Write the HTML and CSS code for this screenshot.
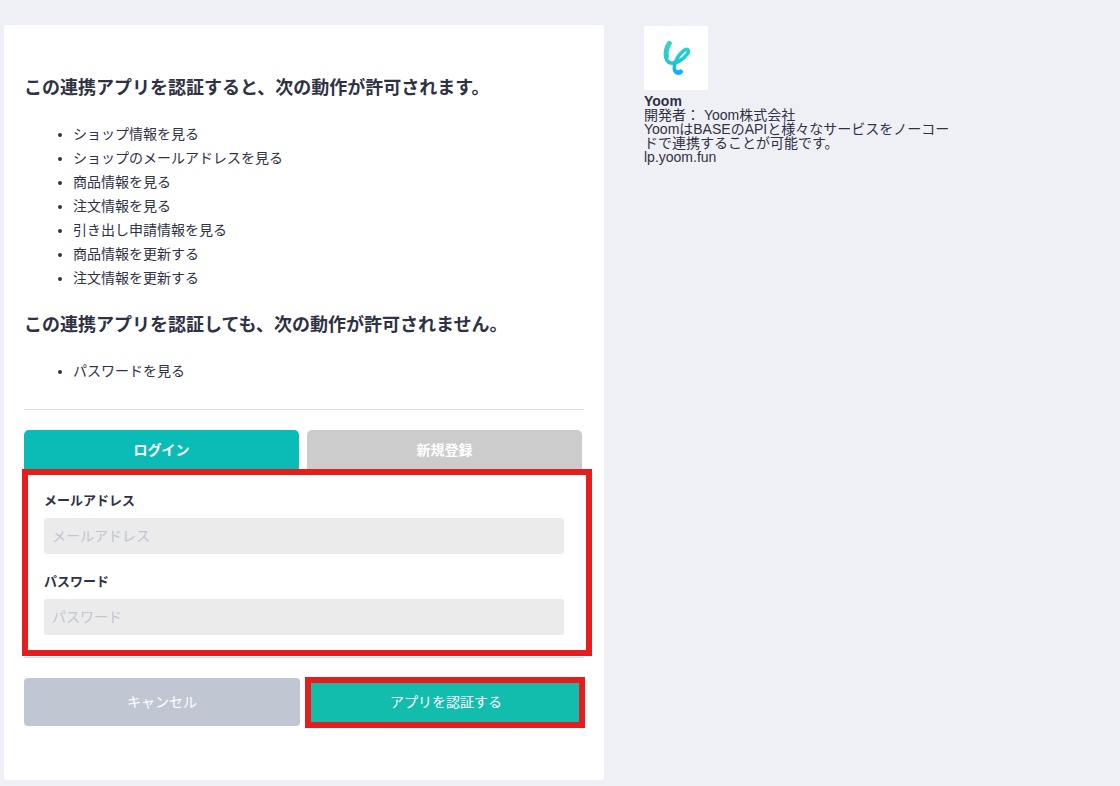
FILE: index.html
```html
<!DOCTYPE html>
<html lang="ja">
<head>
  <meta charset="UTF-8">
  <meta name="viewport" content="width=device-width, initial-scale=1.0">
  <title>アプリ連携の認証</title>
  <link rel="stylesheet" href="styles.css">
</head>
<body>

  <div class="container">
    <main class="auth-card">
      <h2>この連携アプリを認証すると、次の動作が許可されます。</h2>
      <ul class="scope-list">
        <li>ショップ情報を見る</li>
        <li>ショップのメールアドレスを見る</li>
        <li>商品情報を見る</li>
        <li>注文情報を見る</li>
        <li>引き出し申請情報を見る</li>
        <li>商品情報を更新する</li>
        <li>注文情報を更新する</li>
      </ul>

      <h2>この連携アプリを認証しても、次の動作が許可されません。</h2>
      <ul class="scope-list">
        <li>パスワードを見る</li>
      </ul>

      <form class="auth-form">
        <div class="tabs">
          <button type="button" class="tab active">ログイン</button>
          <button type="button" class="tab">新規登録</button>
        </div>

        <div class="login-panel">
          <label for="email">メールアドレス</label>
          <input id="email" type="email" placeholder="メールアドレス">
          <label for="password">パスワード</label>
          <input id="password" type="password" placeholder="パスワード">
        </div>

        <div class="actions">
          <button type="button" class="btn btn-cancel">キャンセル</button>
          <button type="submit" class="btn btn-submit">アプリを認証する</button>
        </div>
      </form>
    </main>

    <aside class="app-info">
      <svg class="app-logo" viewBox="0 0 192 192" role="img" aria-label="Yoom">
        <defs>
          <linearGradient id="yoom" gradientUnits="userSpaceOnUse" x1="80" y1="45" x2="105" y2="146">
            <stop offset="0" stop-color="#38d6b9"/>
            <stop offset="0.55" stop-color="#20cbd6"/>
            <stop offset="1" stop-color="#08adff"/>
          </linearGradient>
        </defs>
        <g fill="none" stroke="url(#yoom)" stroke-linecap="round" stroke-linejoin="round">
          <path stroke-width="15" d="M76 52C68 64 65 80 67 92"/>
          <path stroke-width="11" d="M71 60C63 79 62 101 75 109C94 118 119 99 130 84C138 71 128 66 119 74C107 84 95 101 92 117C89 131 92 139 101 139"/>
          <path stroke-width="14" d="M97 138C103 141 107 140 110 137"/>
        </g>
      </svg>
      <p class="app-name">Yoom</p>
      <p>開発者： Yoom株式会社</p>
      <p>YoomはBASEのAPIと様々なサービスをノーコードで連携することが可能です。</p>
      <a href="#">lp.yoom.fun</a>
    </aside>
  </div>

</body>
</html>
```
FILE: styles.css
```css
* {
  box-sizing: border-box;
}

body {
  margin: 0;
  background-color: #eff0f5;
  color: #2f3144;
  font-family: "Liberation Sans", "Noto Sans CJK JP", sans-serif;
  font-size: 14px;
}

.container {
  display: flex;
  align-items: flex-start;
  gap: 40px;
  padding: 25px 4px 6px;
}

.auth-card {
  flex: 0 1 600px;
  padding: 51px 20px 54px;
  background-color: #fff;
  border-radius: 2px;
}

h2 {
  margin: 0 0 22px;
  font-size: 18px;
  line-height: 24px;
}

.scope-list {
  margin: 0 0 23px;
  padding-left: 49px;
  line-height: 24px;
}

.auth-form {
  margin-top: 26px;
  padding-top: 20px;
  border-top: 1px solid #e0e0e0;
}

.tabs {
  display: flex;
  gap: 8px;
  padding-right: 2px;
}

button {
  padding: 0 0 2px;
  border: none;
  color: #fff;
  font-family: inherit;
  font-size: 14px;
  cursor: pointer;
}

.tab {
  flex: 1;
  height: 40px;
  background-color: #ccc;
  border-radius: 5px 5px 0 0;
  font-weight: bold;
}

.tab.active {
  background-color: #0bbbb6;
}

.login-panel {
  position: relative;
  padding: 20px 20px 22px;
  border-bottom: 1px solid #e0e0e0;
}

/* red frames around the parts to fill in and press */
.login-panel::after,
.btn-submit::after {
  content: "";
  position: absolute;
  border: 6px solid #e71c1c;
  pointer-events: none;
}

.login-panel::after {
  inset: -1px -8px 1px -2px;
}

.login-panel label {
  display: block;
  margin-bottom: 6px;
  font-size: 13px;
  font-weight: bold;
  line-height: 22px;
}

.login-panel input {
  display: block;
  width: 100%;
  height: 36px;
  padding: 0 8px;
  background-color: #ebebeb;
  border: none;
  border-radius: 3px;
  color: inherit;
  font-family: inherit;
  font-size: 14px;
}

.login-panel input + label {
  margin-top: 17px;
}

.login-panel input::placeholder {
  color: #c0c6d2;
}

.actions {
  display: flex;
  gap: 8px;
  margin-top: 20px;
}

.btn {
  flex: 1;
  height: 48px;
  border-radius: 4px;
}

.btn-cancel {
  background-color: #c1c7d2;
}

.btn-submit {
  position: relative;
  background-color: #13bdae;
}

.btn-submit::after {
  inset: -1px -1px -2px -3px;
}

.app-info {
  flex: 0 1 310px;
  padding-top: 1px;
  line-height: 14px;
}

.app-info p {
  margin: 0;
}

.app-logo {
  display: block;
  width: 64px;
  height: 64px;
  margin-bottom: 4px;
  background-color: #fff;
}

.app-name {
  font-weight: bold;
}

.app-info a {
  color: inherit;
  text-decoration: none;
}
```
